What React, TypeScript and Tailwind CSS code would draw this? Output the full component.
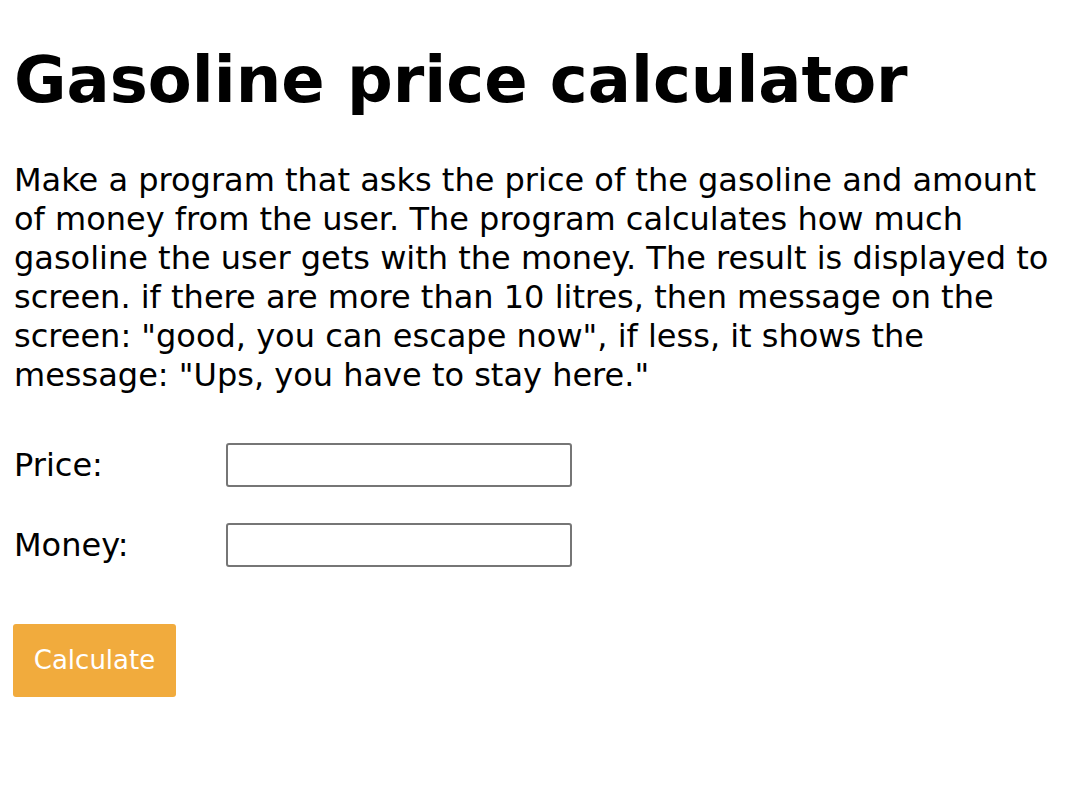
import React, { useState } from 'react';

const App: React.FC = () => {
  const [price, setPrice] = useState('');
  const [money, setMoney] = useState('');

  return (
    <div className="min-h-screen bg-white text-black px-[14px] pt-[36px]" style={{ fontFamily: '"DejaVu Sans", Verdana, sans-serif' }}>
      {/* Title */}
      <h1 className="text-[64px] font-bold leading-[88px]">Gasoline price calculator</h1>

      {/* Task description */}
      <p className="mt-[37px] text-[32px] leading-[39px] whitespace-nowrap">
        Make a program that asks the price of the gasoline and amount
        <br />
        of money from the user. The program calculates how much
        <br />
        gasoline the user gets with the money. The result is displayed to
        <br />
        screen. if there are more than 10 litres, then message on the
        <br />
        screen: "good, you can escape now", if less, it shows the
        <br />
        message: "Ups, you have to stay here."
      </p>

      {/* Form */}
      <div className="mt-[48px] flex flex-col gap-[36px]">
        <div className="flex items-center">
          <label className="w-[212px] text-[32px] leading-[44px]">Price:</label>
          <input
            value={price}
            onChange={(e) => setPrice(e.target.value)}
            className="w-[346px] h-[44px] border-2 border-[#767676] rounded-[3px] px-2 text-[24px] outline-none"
          />
        </div>
        <div className="flex items-center">
          <label className="w-[212px] text-[32px] leading-[44px]">Money:</label>
          <input
            value={money}
            onChange={(e) => setMoney(e.target.value)}
            className="w-[346px] h-[44px] border-2 border-[#767676] rounded-[3px] px-2 text-[24px] outline-none"
          />
        </div>
      </div>

      <button className="mt-[57px] w-[163px] h-[73px] ml-[-1px] bg-[#F1AB3D] text-white text-[26px] rounded-[3px]">
        Calculate
      </button>
    </div>
  );
};

export default App;
